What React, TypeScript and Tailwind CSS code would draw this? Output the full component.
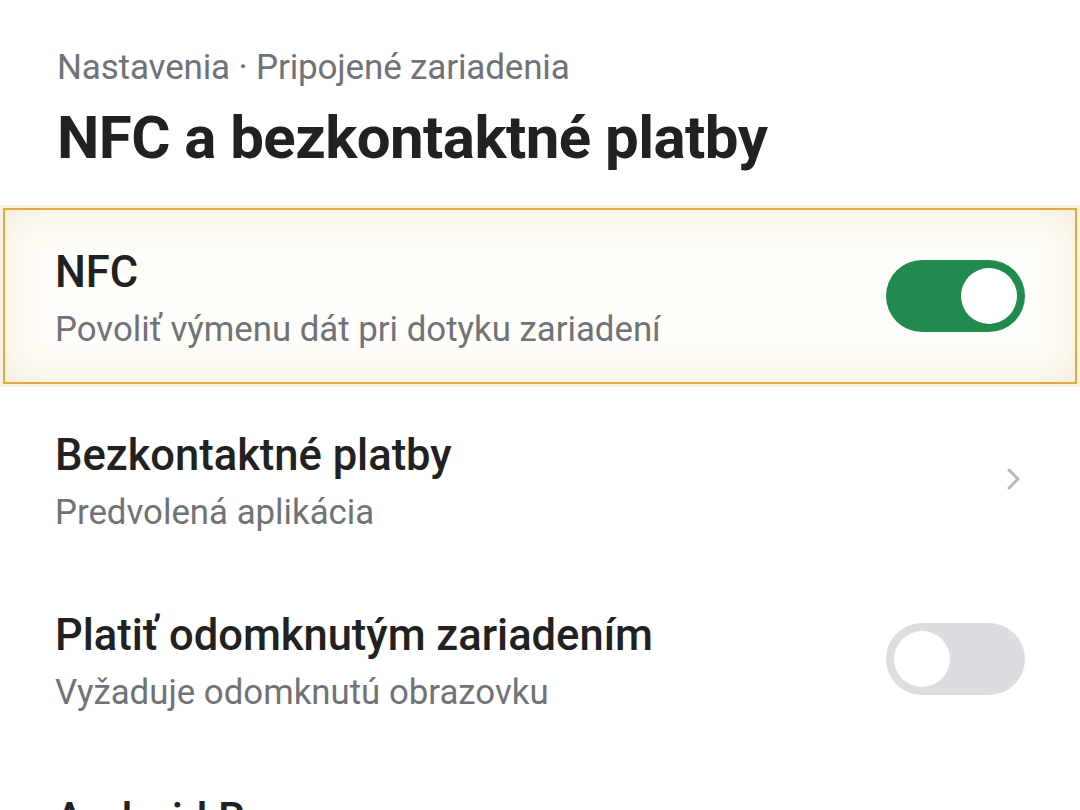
import React, { useState } from 'react';

type Row = {
  id: string;
  title: string;
  subtitle: string;
  kind: 'toggle' | 'link';
  highlighted?: boolean;
};

const ROWS: Row[] = [
  { id: 'nfc', title: 'NFC', subtitle: 'Povoliť výmenu dát pri dotyku zariadení', kind: 'toggle', highlighted: true },
  { id: 'pay', title: 'Bezkontaktné platby', subtitle: 'Predvolená aplikácia', kind: 'link' },
  { id: 'unlock', title: 'Platiť odomknutým zariadením', subtitle: 'Vyžaduje odomknutú obrazovku', kind: 'toggle' },
  { id: 'beam', title: 'Android Beam', subtitle: 'Zdieľanie obsahu cez NFC', kind: 'link' },
];

const Toggle: React.FC<{ on: boolean; onChange: () => void }> = ({ on, onChange }) => (
  <button
    onClick={onChange}
    className={`w-[139px] h-[72px] rounded-full flex items-center px-[8px] shrink-0 ${
      on ? 'bg-[#218b4e] justify-end' : 'bg-[#dcdde1] justify-start'
    }`}
  >
    <span className="w-[56px] h-[56px] rounded-full bg-white block" />
  </button>
);

const Chevron = () => (
  <svg width="16" height="24" viewBox="0 0 16 24" className="mr-[3px] shrink-0">
    <polyline
      points="3,3 12,12 3,21"
      fill="none"
      stroke="#b5b9bf"
      strokeWidth="3"
      strokeLinecap="round"
      strokeLinejoin="round"
    />
  </svg>
);

export default function App() {
  const [state, setState] = useState<Record<string, boolean>>({
    nfc: true,
    unlock: false,
  });

  return (
    <div className="w-[1080px] h-[810px] overflow-hidden bg-white font-['Roboto',sans-serif]">
      {/* Header */}
      <div className="px-[57px] pt-[48px]">
        <div className="text-[35px] leading-[40px] text-[#6f7378] tracking-[-0.15px] whitespace-nowrap">
          Nastavenia · Pripojené zariadenia
        </div>
        <h1 className="mt-[18px] text-[60px] leading-[64px] font-bold text-[#212121] tracking-[-0.55px] whitespace-nowrap">
          NFC a bezkontaktné platby
        </h1>
      </div>

      {/* Settings list */}
      <div className="mt-[38px] mx-[3px] flex flex-col">
        {ROWS.map((row, i) => (
          <div
            key={row.id}
            className={`flex items-center justify-between ${
              row.highlighted
                ? 'h-[176px] pl-[50px] pr-[50px] border-2 border-[#e2ab3f] bg-[#fffdf9] shadow-[0_0_0_3px_#fbf4e4,inset_0_0_40px_#f6ecd6]'
                : 'h-[180px] pl-[52px] pr-[52px]'
            } ${i === 1 ? 'mt-[5px]' : ''} ${i === 3 ? 'mt-[4px]' : ''}`}
          >
            <div className="flex flex-col pt-[6px] whitespace-nowrap">
              <div className="text-[43.5px] leading-[48px] font-medium text-[#212121]">
                {row.title}
              </div>
              <div className="mt-[11px] text-[34.8px] leading-[42px] text-[#6f7378]">
                {row.subtitle}
              </div>
            </div>
            {row.kind === 'toggle' ? (
              <Toggle
                on={state[row.id]}
                onChange={() => setState((s) => ({ ...s, [row.id]: !s[row.id] }))}
              />
            ) : (
              <Chevron />
            )}
          </div>
        ))}
      </div>
    </div>
  );
}
